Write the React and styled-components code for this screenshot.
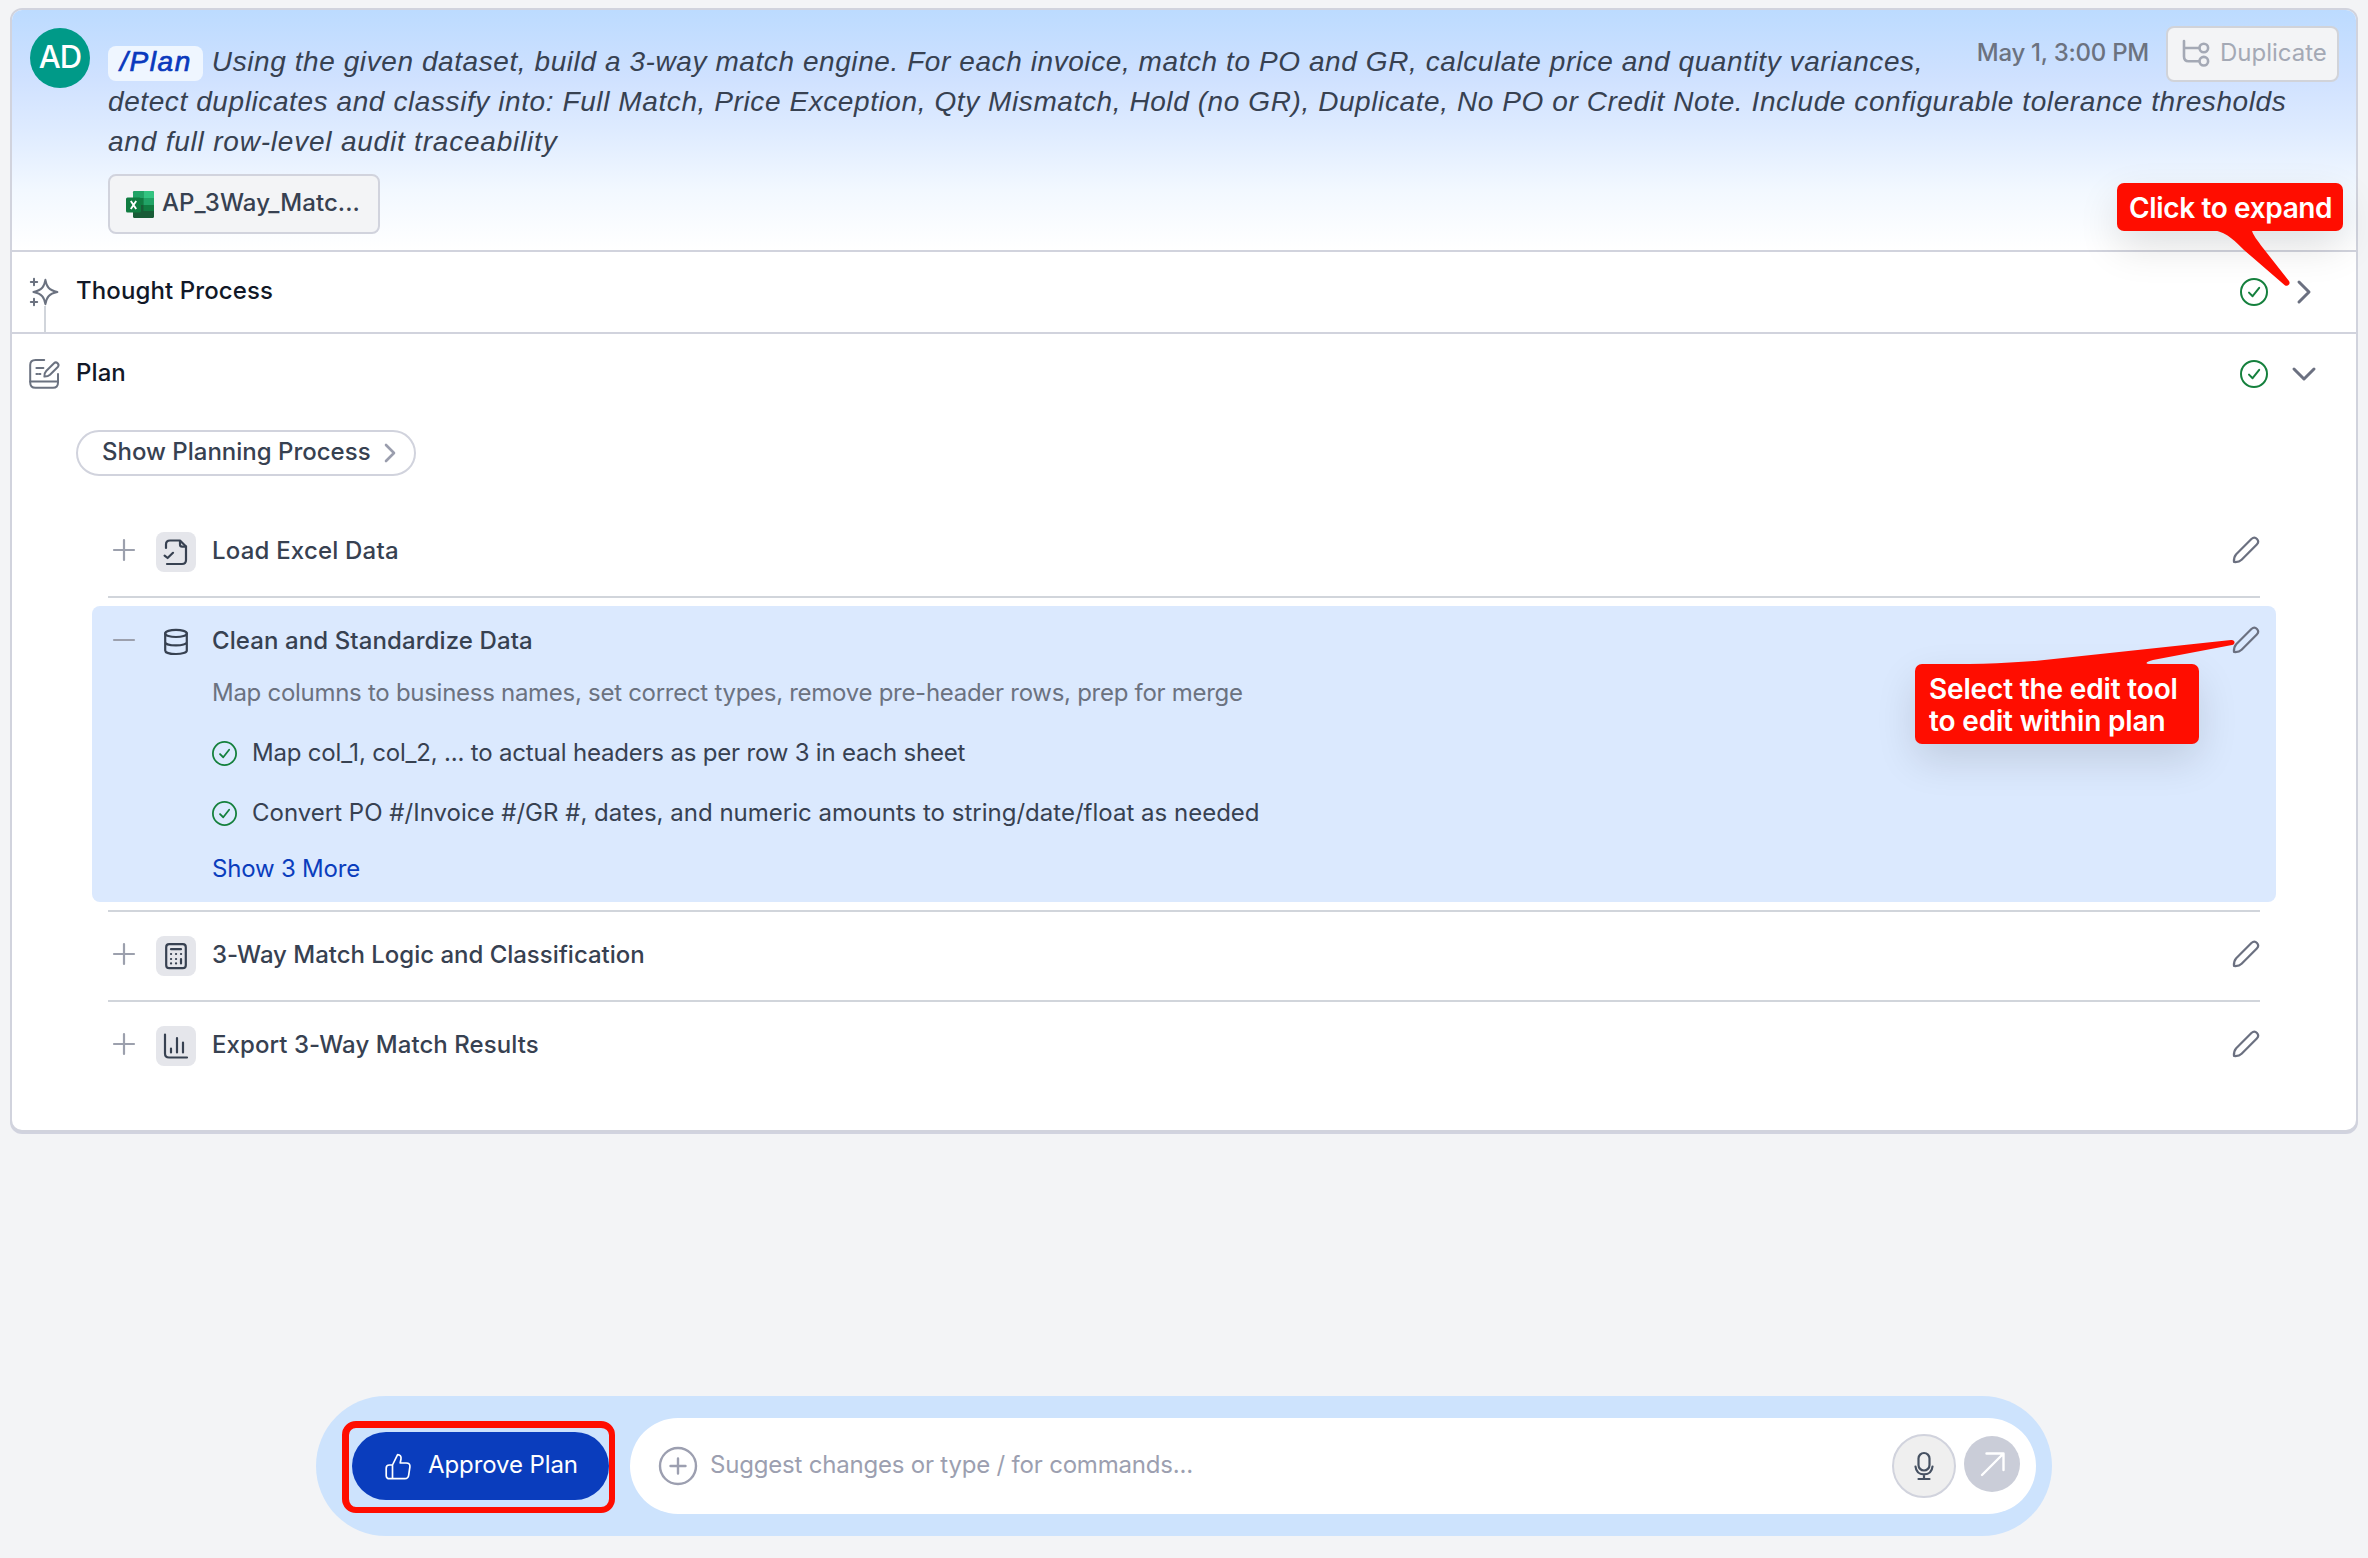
import React from "react";
import styled, { createGlobalStyle } from "styled-components";

const steps = [
  { icon: "file", title: "Load Excel Data", spacing: 0.2 },
  {
    icon: "database",
    title: "Clean and Standardize Data",
    spacing: 0.1,
    open: true,
    description:
      "Map columns to business names, set correct types, remove pre-header rows, prep for merge",
    tasks: [
      {
        text: "Map col_1, col_2, ... to actual headers as per row 3 in each sheet",
        spacing: -0.19,
      },
      {
        text: "Convert PO #/Invoice #/GR #, dates, and numeric amounts to string/date/float as needed",
        spacing: 0.01,
      },
    ],
  },
  {
    icon: "calculator",
    title: "3-Way Match Logic and Classification",
    spacing: -0.02,
  },
  { icon: "chart", title: "Export 3-Way Match Results", spacing: 0.07 },
];

const Svg = ({ w, h, stroke = 2, children }) => (
  <Drawing
    width={w}
    height={h}
    viewBox={`0 0 ${w} ${h}`}
    fill="none"
    stroke="currentColor"
    strokeWidth={stroke}
    strokeLinecap="round"
    strokeLinejoin="round"
  >
    {children}
  </Drawing>
);

const SparkleIcon = () => (
  <Svg w={32} h={32} stroke={2}>
    <path d="M17.4 3.8C18.6 10.6 20.6 14.2 29.4 16C20.6 17.8 18.6 21.4 17.4 28.2C16.2 21.4 14.2 17.8 5.4 16C14.2 14.2 16.2 10.6 17.4 3.8Z" />
    <path d="M6 2.8V9.2M2.8 6H9.2M6 22.8V29.2M2.8 26H9.2" />
  </Svg>
);

const PlanIcon = () => (
  <Svg w={32} h={32} stroke={2}>
    <path d="M16.2 2H7.5C4 2 2.2 3.6 2.2 7V24.5C2.2 28 4 29.8 7.5 29.8H25C28.4 29.8 30 28 30 24.5V16" />
    <path d="M2.2 23.6H30M8.4 10H15.4M8.4 16H9.4M11 16H12.4" />
    <path d="M16.4 18.6C16.2 15.6 16.6 14.6 18.2 13L26 5.2C28.4 3 32 6.4 29.8 9L22 16.8C20.4 18.3 19.4 18.7 16.4 18.6Z" />
  </Svg>
);

const CheckIcon = ({ size }) => (
  <Drawing
    width={size}
    height={size}
    viewBox="0 0 28 28"
    fill="none"
    stroke="currentColor"
    strokeWidth="2"
    strokeLinecap="round"
    strokeLinejoin="round"
  >
    <circle cx="14" cy="14" r="13" />
    <path d="M9 14.6L12.6 18.2L19.2 9.8" />
  </Drawing>
);

const ChevronRight = ({ w = 14, h = 24, stroke = 3 }) => (
  <Svg w={w} h={h} stroke={stroke}>
    <path d={`M2 2L${w - 2} ${h / 2}L2 ${h - 2}`} />
  </Svg>
);

const ChevronDown = () => (
  <Svg w={24} h={14} stroke={3}>
    <path d="M2 2L12 12L22 2" />
  </Svg>
);

const BranchIcon = () => (
  <Svg w={28} h={28} stroke={2.6}>
    <path d="M2 2V17.5C2 20.6 3.6 22.2 6.6 22.2H17M2 9H17" />
    <circle cx="21.8" cy="9" r="4.3" />
    <circle cx="21.8" cy="22.2" r="4.3" />
  </Svg>
);

const PencilIcon = () => (
  <Svg w={28} h={28} stroke={2.2}>
    <path d="M2 26C1.6 21.6 2.2 20.4 4.2 18.2L19.4 3C23.4 -.6 28.4 4.6 24.8 8.4L9.6 23.8C7.6 25.8 6.2 26.4 2 26Z" />
  </Svg>
);

const ExcelIcon = () => (
  <svg width="28" height="27" viewBox="0 0 28 27">
    <rect x="7" width="21" height="27" rx="1.5" fill="#185c37" />
    <path d="M7 7V1.5A1.5 1.5 0 0 1 8.5 0H17.5V7Z" fill="#21a366" />
    <path d="M17.5 0H26.5A1.5 1.5 0 0 1 28 1.5V7H17.5Z" fill="#33c481" />
    <path d="M7 7H17.5V14H7Z" fill="#107c41" />
    <path d="M17.5 7H28V14H17.5Z" fill="#21a366" />
    <path d="M17.5 14H28V20H17.5Z" fill="#107c41" />
    <rect y="6.5" width="15" height="15" rx="1.5" fill="#107c41" />
    <path
      d="M4.8 10L10.2 18M10.2 10L4.8 18"
      stroke="#fff"
      strokeWidth="1.9"
    />
  </svg>
);

const stepIcons = {
  file: (
    <Svg w={28} h={28} stroke={2.2}>
      <path d="M4 10V6.5C4 3.8 5.2 2.5 8 2.5H18L24 8.6V22C24 24.8 22.8 26 20 26H5" />
      <path d="M18 3V6.5C18 8 18.7 8.7 20.2 8.7H24M2.6 17.6L5.6 20L11 14.8" />
    </Svg>
  ),
  database: (
    <Svg w={28} h={28} stroke={2.2}>
      <ellipse cx="14" cy="5.4" rx="10.8" ry="3.6" />
      <path d="M3.2 5.4V22.4C3.2 24.6 8 26 14 26S24.8 24.6 24.8 22.4V5.4M3.2 14C3.2 16 8 17.4 14 17.4S24.8 16 24.8 14" />
    </Svg>
  ),
  calculator: (
    <Svg w={28} h={28} stroke={2.2}>
      <rect x="4.2" y="2.2" width="19.6" height="24" rx="3" />
      <path d="M9 7.2H19" />
      <path d="M9 12H9.1M14 12H14.1M19 12H19.1M9 17H9.1M14 17H14.1M9 21.4H9.1M14 21.4H14.1M19 17V21.4" />
    </Svg>
  ),
  chart: (
    <Svg w={28} h={28} stroke={2.2}>
      <path d="M3 2.5V21.5C3 24.3 4.2 25.5 7 25.5H25M9 16.5V20.5M15 6V20.5M21 10.5V20.5" />
    </Svg>
  ),
};

const ThumbIcon = () => (
  <Svg w={26} h={27} stroke={1.7}>
    <path d="M7.5 12L12.6 1.6C15 1.6 16.4 3.4 16 5.8L15.2 10H21.2C24 10 25.2 11.4 24.9 13.8L23.7 22C23.4 24.6 22.2 25.7 19.8 25.7H4.6C2.2 25.7 1.2 24.6 1.2 22.4V15.2C1.2 13 2.2 12 4.4 12H7.5V25.5" />
  </Svg>
);

const PlusCircleIcon = () => (
  <Svg w={40} h={40} stroke={2.4}>
    <circle cx="20" cy="20" r="18" />
    <path d="M20 12.5V27.5M12.5 20H27.5" />
  </Svg>
);

const MicIcon = () => (
  <Svg w={20} h={30} stroke={2.2}>
    <rect x="4.5" y="2" width="11" height="17.5" rx="5.5" />
    <path d="M1.5 15.5C2 20.5 5 23.3 10 23.3S18 20.5 18.5 15.5M10 23.3V28M4.5 28H15.5" />
  </Svg>
);

const SendIcon = () => (
  <Svg w={26} h={26} stroke={2.4}>
    <path d="M2 24L23.5 2.5M6.5 2.5H23.5V19" />
  </Svg>
);

const Step = ({ step }) => (
  <StepItem $open={step.open}>
    <StepBody $open={step.open}>
      <StepHead $open={step.open}>
        <Toggle>
          <Svg w={22} h={22} stroke={2.2}>
            <path d={step.open ? "M1 11H21" : "M1 11H21M11 1V21"} />
          </Svg>
        </Toggle>
        <Tile $plain={step.open}>{stepIcons[step.icon]}</Tile>
        <StepTitle $spacing={step.spacing}>{step.title}</StepTitle>
        <EditButton>
          <PencilIcon />
        </EditButton>
      </StepHead>
      {step.open && (
        <Details>
          <Description>{step.description}</Description>
          {step.tasks.map((task) => (
            <Task key={task.text}>
              <CheckIcon size={25} />
              <TaskText $spacing={task.spacing}>{task.text}</TaskText>
            </Task>
          ))}
          <ShowMore>Show 3 More</ShowMore>
        </Details>
      )}
    </StepBody>
  </StepItem>
);

const App = () => {
  return (
    <Page>
      <GlobalStyle />
      <Card>
        <Header>
          <Avatar>AD</Avatar>
          <Prompt>
            <FirstRow>
              <PromptLine $spacing={0.58}>
                <Command>/Plan</Command>
                Using the given dataset, build a 3-way match engine. For each
                invoice, match to PO and GR, calculate price and quantity
                variances,
              </PromptLine>
              <Meta>
                <DateText>May 1, 3:00 PM</DateText>
                <DuplicateButton>
                  <BranchIcon />
                  <span>Duplicate</span>
                </DuplicateButton>
              </Meta>
            </FirstRow>
            <PromptLine $spacing={0.59}>
              detect duplicates and classify into: Full Match, Price Exception,
              Qty Mismatch, Hold (no GR), Duplicate, No PO or Credit Note.
              Include configurable tolerance thresholds
            </PromptLine>
            <PromptLine $spacing={0.79}>
              and full row-level audit traceability
            </PromptLine>
            <FileChip>
              <ExcelIcon />
              <span>AP_3Way_Matc...</span>
            </FileChip>
          </Prompt>
        </Header>
        <SectionRow>
          <Rail>
            <SparkleIcon />
            <Connector />
          </Rail>
          <SectionTitle>Thought Process</SectionTitle>
          <Status>
            <CheckIcon size={28} />
          </Status>
          <Chevron>
            <ChevronRight />
          </Chevron>
        </SectionRow>
        <SectionRow $last>
          <Rail>
            <PlanIcon />
          </Rail>
          <SectionTitle>Plan</SectionTitle>
          <Status>
            <CheckIcon size={28} />
          </Status>
          <Chevron>
            <ChevronDown />
          </Chevron>
        </SectionRow>
        <PlanBody>
          <ProcessButton>
            <span>Show Planning Process</span>
            <ChevronRight w={12} h={20} stroke={2.6} />
          </ProcessButton>
          <Steps>
            {steps.map((step) => (
              <Step key={step.title} step={step} />
            ))}
          </Steps>
        </PlanBody>
      </Card>

      <Composer>
        <ApproveWrap>
          <ApproveButton>
            <ThumbIcon />
            <span>Approve Plan</span>
          </ApproveButton>
          <Highlight />
        </ApproveWrap>
        <InputBox>
          <PlusCircleIcon />
          <Placeholder>Suggest changes or type / for commands...</Placeholder>
          <MicButton>
            <MicIcon />
          </MicButton>
          <SendButton>
            <SendIcon />
          </SendButton>
        </InputBox>
      </Composer>

      <ExpandCallout>
        Click to expand
        <ExpandPointer width="90" height="60" viewBox="0 0 90 60">
          <path
            d="M0 0C14 3 22 12 30 20L70.5 55C73.5 57.5 77 54 75 51L49 18C44 11 38 4 38 0Z"
            fill="#ff0d00"
          />
        </ExpandPointer>
      </ExpandCallout>
      <EditCallout>
        Select the edit tool
        <br />
        to edit within plan
        <EditPointer width="320" height="30" viewBox="0 0 320 30">
          <path
            d="M12 27C50 26.5 90 25.5 120 23L316 2C320 1.5 321 6 317 7L238 22C232 23.5 228 26 236 26V28H12Z"
            fill="#ff0d00"
          />
        </EditPointer>
      </EditCallout>
    </Page>
  );
};

const GlobalStyle = createGlobalStyle`
  * {
    box-sizing: border-box;
  }
  body {
    margin: 0;
    background: #f3f4f6;
    font-family: Inter, "Liberation Sans", sans-serif;
  }
  button {
    font-family: inherit;
    padding: 0;
    border: none;
    background: none;
  }
`;

const Drawing = styled.svg`
  display: block;
  flex-shrink: 0;
  overflow: visible;
`;

const Page = styled.div`
  position: relative;
  display: flex;
  flex-direction: column;
  justify-content: space-between;
  width: 2368px;
  height: 1558px;
  padding: 8px 10px 22px;
  overflow: hidden;
  background: #f3f4f6;
  color: #374151;
  font-size: 24px;
`;

const Card = styled.main`
  border: 2px solid #d1d3dd;
  border-radius: 12px;
  background: #fff;
  box-shadow: 0 2px 0 #d1d3df;
  height: 1124px;
  overflow: hidden;
`;

const Header = styled.header`
  display: flex;
  gap: 18px;
  height: 242px;
  padding: 16px 17px 0 18px;
  border-bottom: 2px solid #d1d3dd;
  background: linear-gradient(
    #bcdbff,
    #cfe1ff 28%,
    #deebff 50%,
    #f2f8ff 75%,
    #ffffff
  );
`;

const Avatar = styled.div`
  display: flex;
  align-items: center;
  justify-content: center;
  flex-shrink: 0;
  width: 60px;
  height: 60px;
  margin-top: 2px;
  padding-bottom: 3px;
  border-radius: 50%;
  background: #009a88;
  color: #fff;
  font-size: 31px;
  font-weight: 500;
  letter-spacing: -1px;
`;

const Prompt = styled.div`
  flex: 1;
  min-width: 0;
`;

const FirstRow = styled.div`
  display: flex;
  justify-content: space-between;
  height: 56px;

  > p {
    margin-top: 16px;
  }
`;

const PromptLine = styled.p`
  margin: 0;
  font-family: "Liberation Sans", sans-serif;
  font-size: 28px;
  font-style: italic;
  line-height: 40px;
  letter-spacing: ${(props) => props.$spacing}px;
  white-space: nowrap;
`;

const Command = styled.span`
  margin-right: 9px;
  padding: 0 11px 4px 12px;
  border-radius: 8px;
  background: #eff6ff;
  color: #0a39bd;
  letter-spacing: 1.6px;
  -webkit-text-stroke: 0.7px #0a39bd;
`;

const Meta = styled.div`
  display: flex;
  gap: 17px;
`;

const DateText = styled.time`
  color: #6b7280;
  font-weight: 500;
  letter-spacing: -0.25px;
  line-height: 54px;
  white-space: nowrap;
`;

const DuplicateButton = styled.button`
  display: flex;
  align-items: center;
  gap: 10px;
  width: 173px;
  height: 56px;
  padding: 0 0 3px 14px;
  border: 2px solid #d1d3d9;
  border-radius: 8px;
  background: #f3f4f6;
  color: #a4a9b5;
  font-size: 24px;
`;

const FileChip = styled.div`
  display: flex;
  align-items: center;
  gap: 8px;
  width: 272px;
  height: 60px;
  margin-top: 12px;
  padding: 0 0 0 16px;
  border: 2px solid #d1d3dd;
  border-radius: 8px;
  background: #f3f4f6;
  font-weight: 500;
  letter-spacing: 0.1px;

  span {
    padding-bottom: 3px;
  }
`;

const SectionRow = styled.div`
  display: flex;
  align-items: center;
  height: ${(props) => (props.$last ? 80 : 82)}px;
  padding: 0 29px 0 16px;
  border-bottom: ${(props) => (props.$last ? "none" : "2px solid #d1d3dd")};
`;

const Rail = styled.div`
  display: flex;
  flex-direction: column;
  align-items: center;
  align-self: stretch;
  width: 32px;
  padding-top: 24px;
  color: #6b7280;
`;

const Connector = styled.div`
  flex: 1;
  width: 2px;
  margin: -2px 0 0 2px;
  background: #d1d5db;
`;

const SectionTitle = styled.h2`
  flex: 1;
  margin: 0 0 0 16px;
  padding-bottom: 3px;
  color: #111827;
  font-size: 24px;
  font-weight: 500;
  letter-spacing: 0.1px;
`;

const Status = styled.div`
  color: #15803d;
`;

const Chevron = styled.div`
  display: flex;
  justify-content: center;
  width: 46px;
  margin-left: 13px;
  color: #6b7080;
`;

const PlanBody = styled.div`
  padding: 16px 80px 0 64px;
`;

const ProcessButton = styled.button`
  display: flex;
  align-items: center;
  gap: 13px;
  width: 340px;
  height: 46px;
  padding-left: 24px;
  border: 2px solid #d1d3dd;
  border-radius: 23px;
  color: #9a9dad;
  font-size: 24px;
  font-weight: 500;

  span {
    padding-bottom: 3px;
    color: #374151;
    white-space: nowrap;
  }
`;

const Steps = styled.div`
  margin: 32px 16px 0 32px;
`;

const StepItem = styled.div`
  padding: ${(props) => (props.$open ? "8px 0" : "0")};
  border-bottom: 2px solid #d1d5db;

  &:last-child {
    border-bottom: none;
  }
`;

const StepBody = styled.div`
  display: flow-root;
  height: ${(props) => (props.$open ? 296 : 88)}px;
  margin: ${(props) => (props.$open ? "0 -16px" : "0")};
  padding: ${(props) => (props.$open ? "0 16px" : "0")};
  border-radius: 8px;
  background: ${(props) => (props.$open ? "#dbe9fe" : "none")};
`;

const StepHead = styled.div`
  display: flex;
  align-items: center;
  height: 88px;
  margin-top: ${(props) => (props.$open ? -8 : 0)}px;
`;

const Toggle = styled.div`
  margin: 0 21px 4px 5px;
  color: #9ca0ad;
`;

const Tile = styled.div`
  display: flex;
  align-items: center;
  justify-content: center;
  width: 40px;
  height: 40px;
  border-radius: 8px;
  background: ${(props) => (props.$plain ? "none" : "#e5e6eb")};
`;

const StepTitle = styled.h3`
  flex: 1;
  margin: 0 0 0 16px;
  padding-bottom: 4px;
  font-size: 24px;
  font-weight: 500;
  letter-spacing: ${(props) => props.$spacing}px;
`;

const EditButton = styled.button`
  margin-bottom: 4px;
  color: #6b7080;
`;

const Details = styled.div`
  padding-left: 104px;
`;

const Description = styled.p`
  margin: -16px 0 8px;
  color: #6b7280;
  letter-spacing: -0.28px;
  line-height: 45px;
`;

const Task = styled.div`
  display: flex;
  align-items: center;
  gap: 15px;
  height: 60px;
  color: #15803d;
`;

const TaskText = styled.span`
  padding-bottom: 1px;
  color: #374151;
  letter-spacing: ${(props) => props.$spacing}px;
`;

const ShowMore = styled.a`
  display: block;
  margin-top: 10px;
  color: #0a3dbd;
  letter-spacing: -0.2px;
  line-height: 32px;
`;

const Composer = styled.footer`
  display: flex;
  align-items: center;
  gap: 21px;
  width: 1736px;
  height: 140px;
  margin-left: 306px;
  padding: 0 16px 0 36px;
  border-radius: 70px;
  background: #cde3fd;
`;

const ApproveWrap = styled.div`
  position: relative;
`;

const ApproveButton = styled.button`
  display: flex;
  align-items: center;
  gap: 17px;
  width: 257px;
  height: 68px;
  padding-left: 33px;
  border-radius: 34px;
  background: #0a3dbd;
  color: #fff;
  font-size: 24px;

  span {
    padding-bottom: 3px;
    letter-spacing: -0.1px;
    white-space: nowrap;
  }
`;

const Highlight = styled.div`
  position: absolute;
  inset: -11px -6px -13px -10px;
  border: solid #ff0d00;
  border-width: 7px 6px 6px 7px;
  border-radius: 14px;
`;

const InputBox = styled.div`
  display: flex;
  align-items: center;
  flex: 1;
  height: 96px;
  padding: 0 16px 0 28px;
  border-radius: 48px;
  background: #fff;
  color: #9c9fb0;
`;

const Placeholder = styled.span`
  flex: 1;
  padding: 0 0 3px 12px;
  letter-spacing: -0.2px;
`;

const RoundButton = styled.button`
  display: flex;
  align-items: center;
  justify-content: center;
  border-radius: 50%;
`;

const MicButton = styled(RoundButton)`
  width: 64px;
  height: 64px;
  border: 2px solid #d1d3dd;
  background: #efefef;
  color: #465162;
`;

const SendButton = styled(RoundButton)`
  width: 56px;
  height: 56px;
  margin: 0 0 4px 8px;
  padding-left: 1px;
  background: #cacdd8;
  color: #fff;
`;

const Callout = styled.div`
  position: absolute;
  border-radius: 7px;
  background: #ff0d00;
  box-shadow: 0 16px 40px rgba(0, 0, 0, 0.12);
  color: #fff;
  font-size: 28px;
  font-weight: 600;
  line-height: 32px;
  white-space: nowrap;
`;

const ExpandCallout = styled(Callout)`
  top: 183px;
  left: 2117px;
  width: 226px;
  height: 48px;
  padding: 9px 12px;
  letter-spacing: -0.36px;
`;

const EditCallout = styled(Callout)`
  top: 664px;
  left: 1915px;
  width: 284px;
  height: 80px;
  padding: 9px 14px;
  letter-spacing: -0.16px;
`;

const ExpandPointer = styled.svg`
  position: absolute;
  top: 47px;
  left: 97px;
`;

const EditPointer = styled.svg`
  position: absolute;
  top: -26px;
  left: 0;
`;

export default App;
